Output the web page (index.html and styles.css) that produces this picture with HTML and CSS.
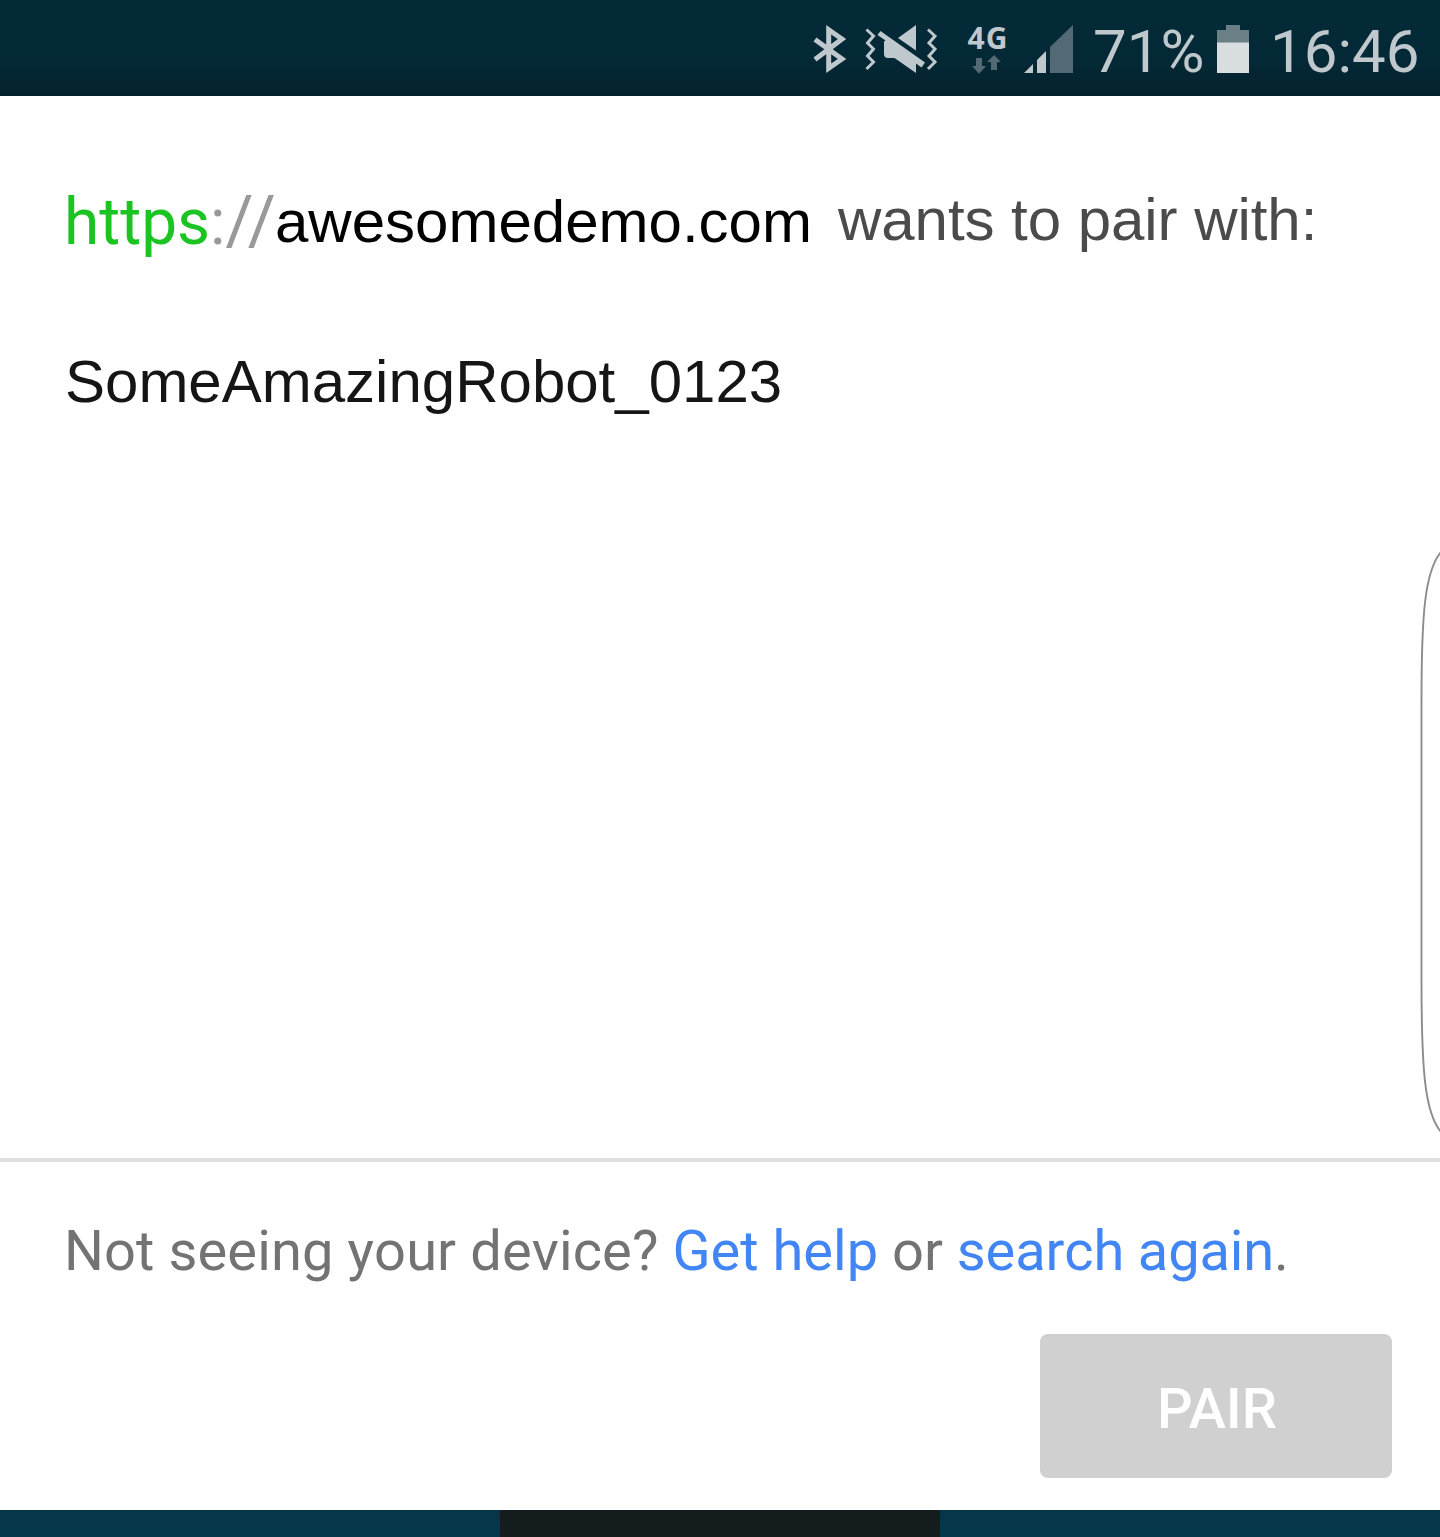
FILE: index.html
```html
<!DOCTYPE html>
<html lang="en">
<head>
<meta charset="utf-8">
<title>Pair device</title>
<link rel="stylesheet" href="styles.css">
</head>
<body>
<header class="status-bar">
  <svg class="status-icons" width="280" height="96" viewBox="800 0 280 96" aria-hidden="true">
    <g fill="none" stroke="#bfc8cc" stroke-width="5">
      <path d="M815 39.500 L842 59 L828.700 68.300 V29.700 L842 39 L815 59.500"/>
      <path stroke-width="3" d="M866.500 29.500 L873.500 36 L867.500 43 L873.500 49 L867.500 56 L873.500 62 L866.500 69"/>
      <path stroke-width="3" d="M928 29.500 L935 36 L929 43 L935 49 L929 56 L935 62 L928 69"/>
    </g>
    <path fill="#bfc8cc" d="M916 25 V50.500 L898 38 Z M880.500 31 L925 62.500 L921.500 67.500 L916 63.500 V73 L894.500 58 H888 Q884 58 884 54 V41.500 L885.500 40.500 L877.500 35 Z"/>
    <path fill="#536a74" d="M976 58 H982 V66 H986 L979 73.700 L972 66 H976 Z M991 70 V62 H987 L994 55 L1001 62 H997 V70 Z M1050 73 V47 L1073 25 V73 Z"/>
    <path fill="#bfc8cc" d="M1024 73 L1033 64 V73 Z M1037 73 V60 L1046 51 V73 Z"/>
    <text class="network" x="967.500" y="49">4G</text>
  </svg>
  <span class="charge">71%</span>
  <svg class="battery" width="32" height="48" viewBox="0 0 32 48" aria-hidden="true">
    <path fill="#6b7f87" d="M0 5 H9 V0 H23 V5 H32 V18 H0 Z"/>
    <path fill="#d8dde0" d="M0 17.500 H32 V48 H0 Z"/>
  </svg>
  <time class="clock">16:46</time>
</header>
<main class="dialog">
  <section class="devices">
    <h1 class="request"><span class="protocol"><span class="secure">https</span>:<span class="slashes">//</span></span><span class="domain">awesomedemo.com</span><span class="wants">wants to pair with:</span></h1>
    <div class="device">SomeAmazingRobot_0123</div>
  </section>
  <footer class="actions">
    <p class="help"><span class="question">Not seeing your device? </span><a class="link">Get help</a> or <a class="link search">search again</a>.</p>
    <button class="pair" disabled>PAIR</button>
  </footer>
</main>
<div class="page-behind"><div class="page-block"></div></div>
<svg class="edge-handle" width="22" height="590" viewBox="1418 547 22 590" aria-hidden="true">
  <path d="M1441 552 C1425 571 1421.500 613 1421.500 700 V980 C1421.500 1072 1425 1113 1441 1132" fill="none" stroke="#8c8c8c" stroke-width="1.900"/>
</svg>
</body>
</html>
```
FILE: styles.css
```css
* { box-sizing: border-box; }
body {
  margin: 0;
  width: 1440px;
  height: 1537px;
  overflow: hidden;
  position: relative;
  display: flex;
  flex-direction: column;
  background: #fff;
  font-family: Roboto, sans-serif;
}
.status-bar {
  height: 96px;
  flex: none;
  display: flex;
  align-items: flex-start;
  justify-content: flex-end;
  padding-right: 20px;
  background: linear-gradient(#042a38 0%, #042936 60%, #03212c 100%);
  color: #bfc8cc;
  font-size: 60px;
  line-height: 70px;
}
.status-icons { flex: none; }
.network { font: bold 30px "Open Sans", sans-serif; letter-spacing: 1px; fill: #bfc8cc; }
.charge { width: 137px; padding: 17px 0 0 13px; }
.battery { margin-top: 25px; flex: none; }
.clock { width: 171px; padding: 17px 0 0 21px; white-space: nowrap; }
.dialog {
  height: 1414px;
  flex: none;
  display: flex;
  flex-direction: column;
  background: #fff;
}
.devices {
  height: 1066px;
  padding: 84px 0 0 64px;
  border-bottom: 4px solid #e0e0e0;
}
.request {
  margin: 0;
  height: 86px;
  display: flex;
  align-items: flex-start;
  font: 60px/80px "Liberation Sans", Arial, sans-serif;
  white-space: nowrap;
}
.protocol {
  width: 211px;
  padding-top: 3px;
  font-family: Roboto, sans-serif;
  font-size: 64px;
  font-kerning: none;
  color: #999;
}
.secure { color: #1bc423; }
.slashes { font-size: 68px; line-height: 1; letter-spacing: -6px; }
.domain { width: 563px; padding-top: 2px; color: #000; }
.wants { color: #4b4b4b; letter-spacing: -0.05px; }
.device {
  margin: 76px 0 0 1px;
  font: 60px/80px "Liberation Sans", Arial, sans-serif;
  color: #151515;
}
.actions {
  flex: 1;
  display: flex;
  flex-direction: column;
  padding: 49px 48px 32px 64px;
}
.help {
  margin: 0;
  font-size: 56px;
  line-height: 80px;
  font-kerning: none;
  color: #737373;
  white-space: nowrap;
}
.question { letter-spacing: 0.11px; }
.link { color: #4285f4; }
.search { letter-spacing: -0.15px; }
.pair {
  width: 352px;
  height: 144px;
  margin-top: auto;
  align-self: flex-end;
  border: 0;
  border-radius: 8px;
  padding: 6px 0 0 2px;
  background: #d0d0d0;
  color: #fff;
  font: 500 56px/66px Roboto, sans-serif;
}
.page-behind {
  flex: 1;
  display: flex;
  justify-content: center;
  background: linear-gradient(#063547, #05384b);
}
.page-block { width: 440px; background: #141c1d; }
.edge-handle { position: absolute; right: 0; top: 547px; }
```
